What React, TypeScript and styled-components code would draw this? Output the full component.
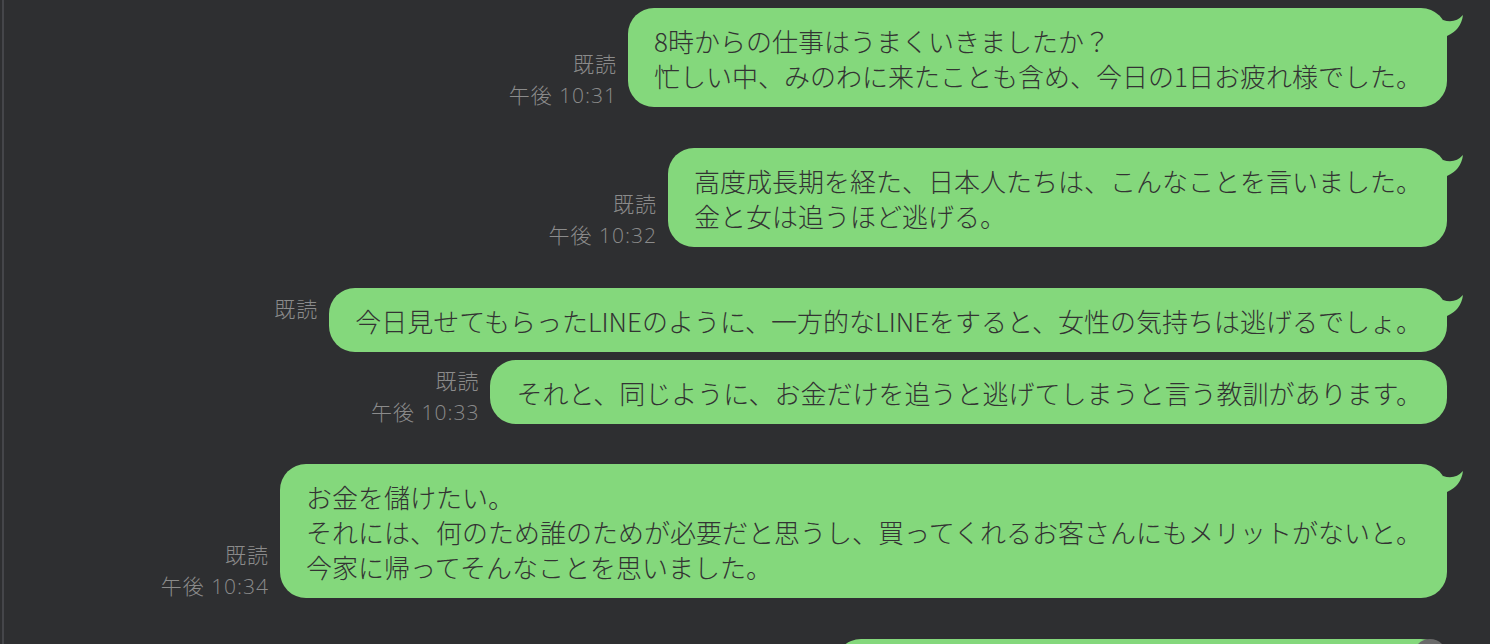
import styled, { createGlobalStyle } from 'styled-components';

const GlobalStyle = createGlobalStyle`
  html, body {
    margin: 0;
    padding: 0;
    background: #2e2f31;
  }
  body {
    font-family: "Noto Sans CJK JP", "Noto Sans", sans-serif;
  }
`;

const Screen = styled.div`
  display: flex;
  height: 100vh;
  overflow: hidden;
  background: #2e2f31;
`;

const EdgeLine = styled.div`
  width: 2px;
  margin-left: 2px;
  flex-shrink: 0;
  background: #45464a;
`;

const Thread = styled.div`
  flex: 1;
  display: flex;
  flex-direction: column;
  padding: 8px 43px 0 0;
`;

const Row = styled.div<{ $gap: number }>`
  display: flex;
  flex-shrink: 0;
  justify-content: flex-end;
  align-items: flex-end;
  gap: 12px;
  margin-top: ${(p) => p.$gap}px;
`;

const Meta = styled.div`
  display: flex;
  flex-direction: column;
  align-items: flex-end;
  margin-bottom: -4px;
  font-family: "Open Sans", "Noto Sans CJK JP", sans-serif;
  font-size: 21px;
  font-weight: 300;
  line-height: 31px;
  letter-spacing: 1px;
  color: #8b8b8b;
  white-space: nowrap;
`;

const MetaLine = styled.span`
  height: 31px;
  margin-right: -1px;
`;

const Bubble = styled.div`
  position: relative;
  flex-shrink: 0;
  padding: 15px 25px 14px 26px;
  border-radius: 26px;
  background: #84d87c;
  color: #333;
  font-size: 26px;
  font-weight: 300;
  line-height: 35px;
  white-space: pre;
`;

const PeekBubble = styled(Bubble)<{ $width: number }>`
  width: ${(p) => p.$width}px;
  height: 64px;
  box-sizing: border-box;
`;

const TailSvg = styled.svg`
  position: absolute;
  top: 0;
  right: -18px;
`;

const ScrollButton = styled.div`
  position: absolute;
  top: 0;
  right: 0;
  width: 34px;
  height: 34px;
  border-radius: 50%;
  background: #6a6a6a;
`;

type Message = {
  text: string;
  time?: string;
  gap: number;
  tail?: boolean;
};

const messages: Message[] = [
  {
    text: '8時からの仕事はうまくいきましたか？\n忙しい中、みのわに来たことも含め、今日の1日お疲れ様でした。',
    time: '午後 10:31',
    gap: 0,
    tail: true,
  },
  {
    text: '高度成長期を経た、日本人たちは、こんなことを言いました。\n金と女は追うほど逃げる。',
    time: '午後 10:32',
    gap: 41,
    tail: true,
  },
  {
    text: '今日見せてもらったLINEのように、一方的なLINEをすると、女性の気持ちは逃げるでしょ。',
    gap: 41,
    tail: true,
  },
  {
    text: 'それと、同じように、お金だけを追うと逃げてしまうと言う教訓があります。',
    time: '午後 10:33',
    gap: 8,
  },
  {
    text: 'お金を儲けたい。\nそれには、何のため誰のためが必要だと思うし、買ってくれるお客さんにもメリットがないと。\n今家に帰ってそんなことを思いました。',
    time: '午後 10:34',
    gap: 40,
    tail: true,
  },
];

const Tail = () => (
  <TailSvg width="22" height="30" viewBox="0 0 22 30">
    <path d="M0 12 Q12 16 20 7 Q18 22 4 28 L0 28 Z" fill="#84d87c" />
  </TailSvg>
);

const App = () => {
  return (
    <Screen>
      <GlobalStyle />
      <EdgeLine />
      <Thread>
        {messages.map((m, i) => (
          <Row key={i} $gap={m.gap}>
            <Meta>
              <MetaLine>既読</MetaLine>
              <MetaLine>{m.time ?? ''}</MetaLine>
            </Meta>
            <Bubble>
              {m.text}
              {m.tail && <Tail />}
            </Bubble>
          </Row>
        ))}
        <Row $gap={41}>
          <PeekBubble $width={612}>
            <ScrollButton />
            <Tail />
          </PeekBubble>
        </Row>
      </Thread>
    </Screen>
  );
};

export default App;
